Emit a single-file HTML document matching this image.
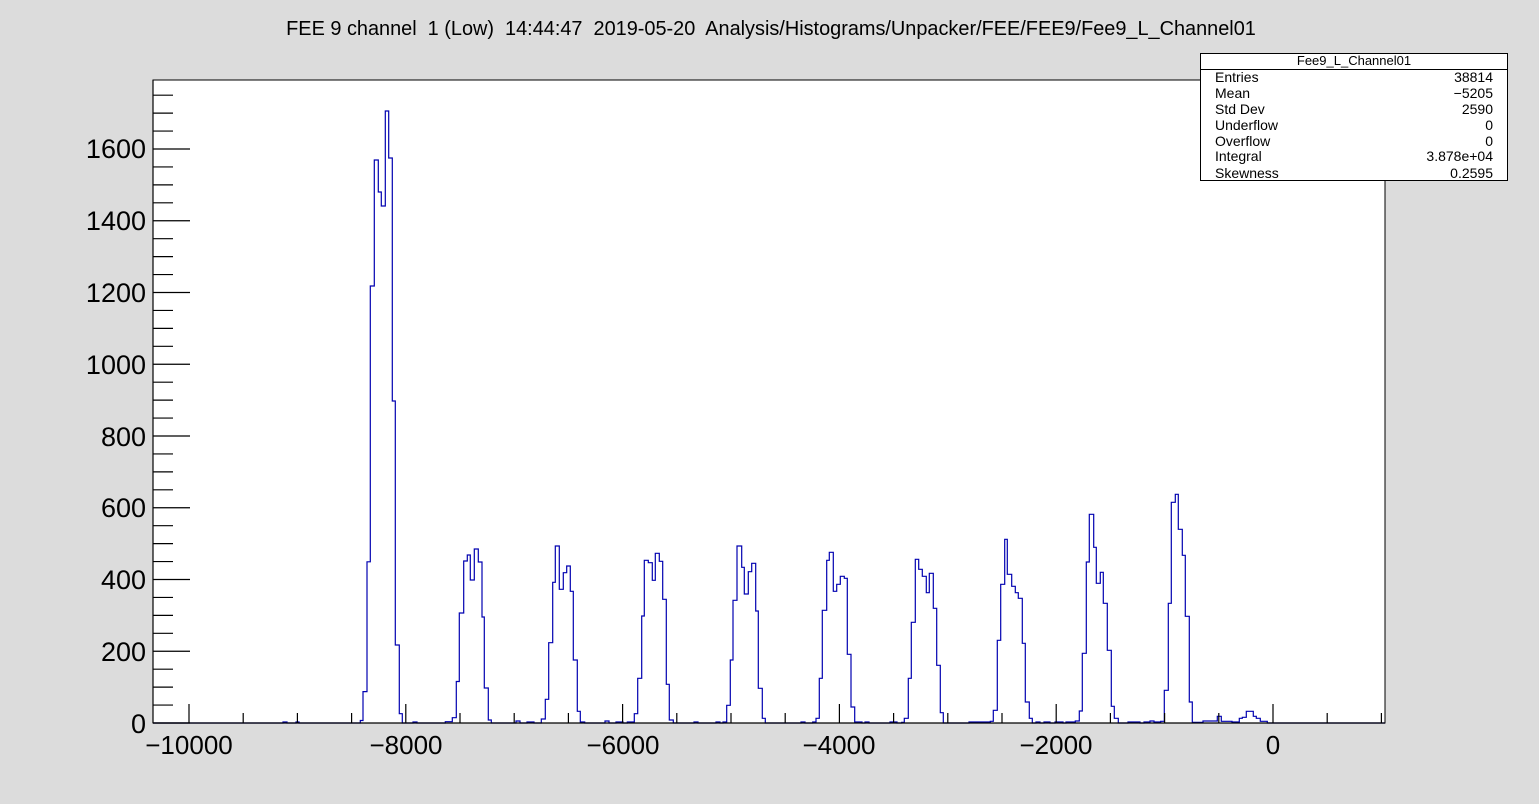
<!DOCTYPE html>
<html><head><meta charset="utf-8"><style>
html,body{margin:0;padding:0;background:#dcdcdc;}
svg{display:block;}
text{font-family:"Liberation Sans",sans-serif;fill:#000;white-space:pre;}
</style></head><body>
<svg width="1539" height="804" viewBox="0 0 1539 804" xmlns="http://www.w3.org/2000/svg" xml:space="preserve">
<rect x="0" y="0" width="1539" height="804" fill="#dcdcdc"/>
<rect x="153" y="80" width="1232" height="643" fill="#fff" stroke="#000" stroke-width="1"/>
<text x="771" y="35" font-size="19.9" text-anchor="middle">FEE 9 channel  1 (Low)  14:44:47  2019-05-20  Analysis/Histograms/Unpacker/FEE/FEE9/Fee9_L_Channel01</text>

<path fill="none" stroke="#0000b0" stroke-width="1.2" d="M153 723 H283 V722 H287 V723 H296 V722 H299 V723
H360.3 V720.5 H363 V691.6 H367 V561.8 H370.3 V286 H374.3 V160 H378.3 V192 H381.3 V206 H385.3 V111 H388.7 V158 H392.3 V401 H395.3 V645 H399.3 V713.7 H402.3 V723
H413 V722 H417 V723
H445.3 V721.7 H452.3 V717.7 H456.3 V681.5 H459.3 V613 H463.7 V561 H467.3 V555 H470.3 V580 H474.3 V549 H478.3 V562 H482 V617 H484.3 V688 H488.3 V720 H491.3 V723
H516 V721 H520 V723 H527 V722 H534 V723
H541.3 V719 H545.3 V699.3 H548.7 V642.7 H552.7 V582.3 H555.3 V546 H559.3 V589.3 H563.3 V572.7 H566.7 V566 H570.3 V591.3 H573.3 V660 H577.3 V711.3 H580.3 V722 H584.7 V723
H605 V721 H609 V723 H616 V722 H623 V723 H627.3 V722 H634.3 V713.7 H637.7 V678.3 H641.7 V616 H644.3 V560.3 H648.3 V562.7 H652.3 V580.3 H655.3 V553.3 H659.3 V561.3 H662.7 V599.3 H666.3 V684.3 H669.3 V720 H673.3 V723
H694 V722 H698 V723 H716 V722 H720 V723 H723 V722
H726.7 V705.3 H730.3 V660 H733 V600.3 H737 V546 H741.7 V567.3 H744.3 V594 H748.3 V571.7 H751.7 V563.3 H755.7 V611 H758.3 V688.3 H762.3 V718.3 H765.3 V723
H801 V722 H805 V723
H812.7 V722 H816 V718.3 H819.3 V678.3 H822.3 V610.3 H826.7 V560.3 H829.3 V552.3 H833.3 V591.3 H836.7 V584.3 H840.3 V576.3 H844.3 V578.3 H847.3 V654.3 H851 V707 H854.7 V722 H862 V723 H865 V722 H869 V723
H890 V722 H897 V723 H901.7 V722.3 H904.3 V718.3 H908.3 V678.3 H911.3 V622.3 H915.3 V559.3 H918.7 V569.3 H922.3 V576.3 H926.3 V592.7 H929.3 V573.3 H933.3 V608.3 H936.7 V665.3 H940.3 V712.7 H943.3 V723
H969 V722 H990.3 V721.3 H993.3 V710.3 H997.3 V640.3 H1000.7 V584.3 H1004.7 V539.3 H1007.3 V574.3 H1011.7 V586.3 H1015.3 V592.7 H1018.3 V598.3 H1022.3 V643.3 H1025.3 V702 H1029.3 V718.3 H1032.3 V723
H1036 V722 H1040 V723 H1044 V722 H1050 V723 H1055 V722 H1063 V723 H1066 V722
H1075.3 V721 H1079.3 V711 H1082.3 V653.3 H1086.3 V562 H1089.3 V514.3 H1093.7 V547.3 H1096.3 V583.3 H1100.3 V572.3 H1103.3 V603.3 H1107.3 V650.3 H1111.3 V706.3 H1114.3 V718.3 H1118.3 V723
H1128 V722 H1140 V723 H1144 V722 H1150 V721 H1154 V722
H1160.7 V721.3 H1164.3 V690.3 H1168.3 V603.3 H1171.3 V502.3 H1175.3 V494.3 H1178.3 V529.3 H1182.3 V555.3 H1185.3 V616.3 H1189.3 V702 H1192.3 V722.3
H1203 V721 H1217.3 V716.3 H1221.3 V721.3 H1232 V722 H1239.3 V718.3 H1242.3 V717.3 H1246.3 V711.3 H1249.3 V711.3 H1253.3 V716.3 H1256.3 V718.3 H1260.3 V721.3 H1267.3 V723 H1385"/>

<g stroke="#000" stroke-width="1.2">
<line x1="153" y1="723" x2="1385" y2="723"/>
<line x1="153" y1="80" x2="153" y2="723"/>
<path d="M153 723H190M153 651.25H190M153 579.5H190M153 507.75H190M153 436H190M153 364.25H190M153 292.5H190M153 220.75H190M153 149H190"/>
<path d="M153 705.06H173M153 687.13H173M153 669.19H173M153 633.31H173M153 615.38H173M153 597.44H173M153 561.56H173M153 543.63H173M153 525.69H173M153 489.81H173M153 471.88H173M153 453.94H173M153 418.06H173M153 400.13H173M153 382.19H173M153 346.31H173M153 328.38H173M153 310.44H173M153 274.56H173M153 256.63H173M153 238.69H173M153 202.81H173M153 184.88H173M153 166.94H173M153 131.06H173M153 113.13H173M153 95.19H173"/>
<path d="M189 723V704M405.8 723V704M622.6 723V704M839.4 723V704M1056.2 723V704M1273 723V704"/>
<path d="M243.2 723V713M297.4 723V713M351.6 723V713M460 723V713M514.2 723V713M568.4 723V713M676.8 723V713M731 723V713M785.2 723V713M893.6 723V713M947.8 723V713M1002 723V713M1110.4 723V713M1164.6 723V713M1218.8 723V713M1327.2 723V713M1381.4 723V713"/>
</g>

<g font-size="27" text-anchor="end">
<text x="146" y="733">0</text>
<text x="146" y="661">200</text>
<text x="146" y="589">400</text>
<text x="146" y="517">600</text>
<text x="146" y="446">800</text>
<text x="146" y="374">1000</text>
<text x="146" y="302">1200</text>
<text x="146" y="230">1400</text>
<text x="146" y="158">1600</text>
</g>
<g font-size="26" text-anchor="middle">
<text x="189" y="754">−10000</text>
<text x="406" y="754">−8000</text>
<text x="623" y="754">−6000</text>
<text x="839" y="754">−4000</text>
<text x="1056" y="754">−2000</text>
<text x="1273" y="754">0</text>
</g>

<rect x="1200.5" y="53.5" width="307" height="127" fill="#fff" stroke="#000" stroke-width="1"/>
<line x1="1200.5" y1="69.5" x2="1507.5" y2="69.5" stroke="#000" stroke-width="1"/>
<g font-size="14">
<text x="1354" y="65" text-anchor="middle" font-size="13">Fee9_L_Channel01</text>
<text x="1215" y="82">Entries</text>
<text x="1215" y="98">Mean</text>
<text x="1215" y="114">Std Dev</text>
<text x="1215" y="130">Underflow</text>
<text x="1215" y="146">Overflow</text>
<text x="1215" y="161">Integral</text>
<text x="1215" y="178">Skewness</text>
</g>
<g font-size="14" text-anchor="end">
<text x="1493" y="82">38814</text>
<text x="1493" y="98">−5205</text>
<text x="1493" y="114">2590</text>
<text x="1493" y="130">0</text>
<text x="1493" y="146">0</text>
<text x="1493" y="161">3.878e+04</text>
<text x="1493" y="178">0.2595</text>
</g>
</svg>
</body></html>
